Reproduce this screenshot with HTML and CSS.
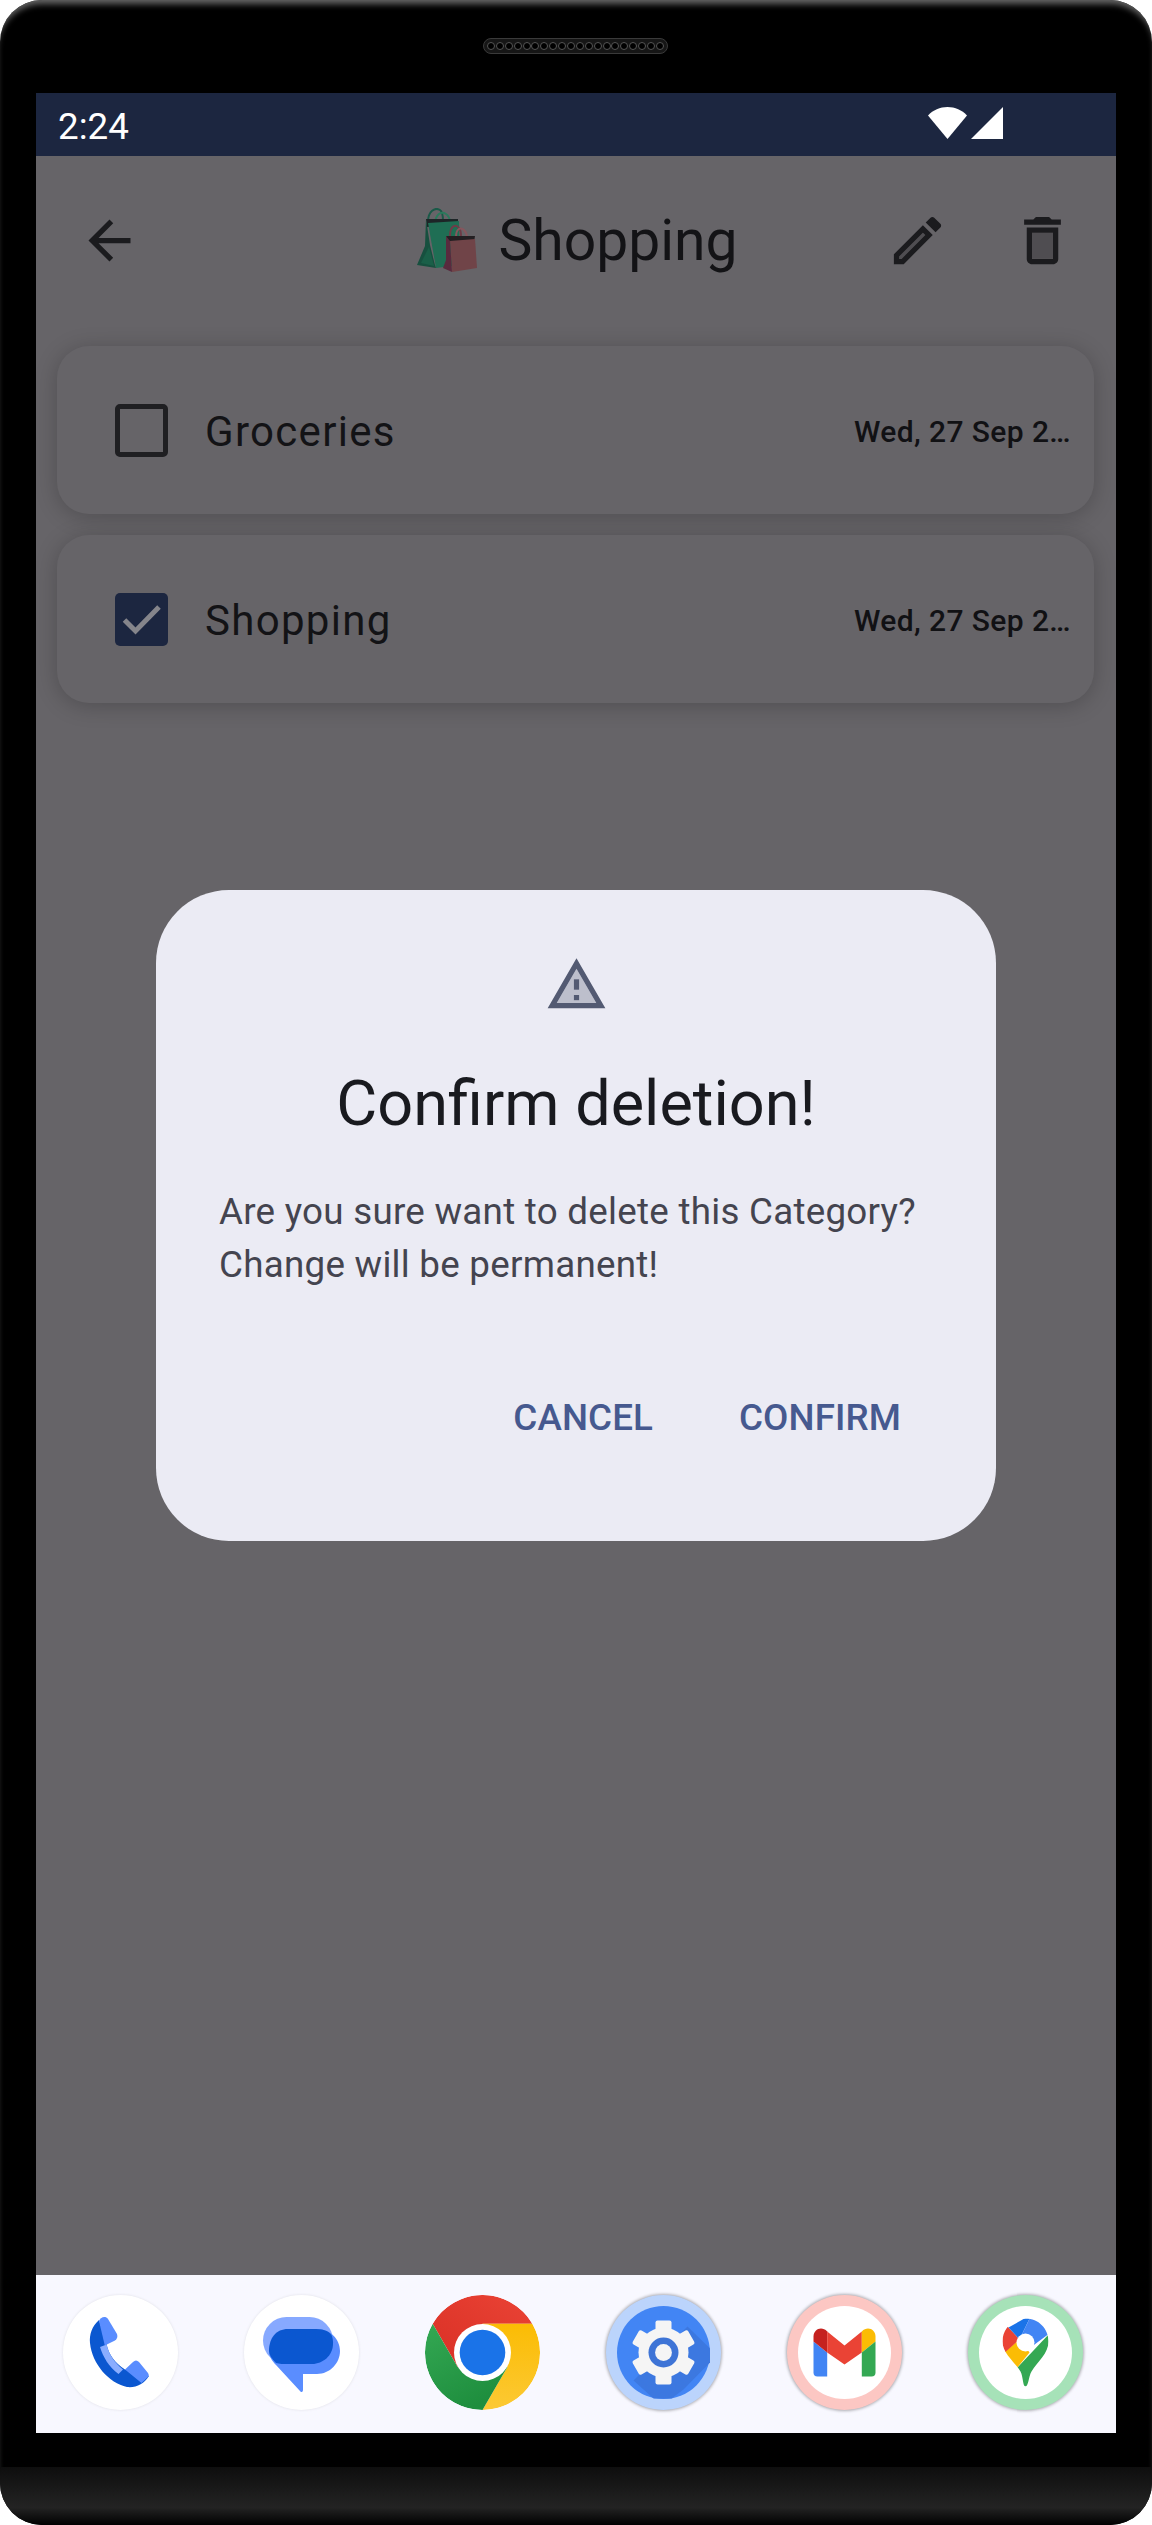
FILE: index.html
```html
<!DOCTYPE html>
<html lang="en">

<head>
    <meta charset="UTF-8">
    <meta name="viewport" content="width=device-width, initial-scale=1.0">
    <title>Shopping</title>
    <link rel="stylesheet" href="styles.css">
</head>

<body>
    <div class="phone">
        <div class="speaker">
            <i></i><i></i><i></i><i></i><i></i><i></i><i></i><i></i><i></i><i></i>
            <i></i><i></i><i></i><i></i><i></i><i></i><i></i><i></i><i></i><i></i>
        </div>

        <div class="screen">
            <div class="status-bar">
                <span class="clock">2:24</span>
                <div class="status-icons">
                    <svg width="39" height="32" viewBox="0 0 39 32">
                        <path fill="#fff" d="M19.5 32 0 8.5C5 3 12 0 19.5 0S34 3 39 8.5z" />
                    </svg>
                    <svg width="32" height="32" viewBox="0 0 32 32">
                        <path fill="#fff" d="M32 0v32H0z" />
                    </svg>
                </div>
            </div>

            <div class="app">
                <div class="toolbar">
                    <div class="toolbar-left">
                        <svg class="icon" viewBox="0 0 24 24">
                            <path d="M20 11H7.83l5.59-5.59L12 4l-8 8 8 8 1.41-1.41L7.83 13H20v-2z" />
                        </svg>
                    </div>
                    <div class="toolbar-title">
                        <!-- shopping bags emoji -->
                        <svg class="bags" width="60" height="64" viewBox="0 0 60 64">
                            <path fill="none" stroke="#1a5a48" stroke-width="2" d="M11 14C11 3 18-1 23 2c3 2 3 7 3 11" />
                            <path fill="none" stroke="#2b7a5c" stroke-width="2" d="M18 17C18 6 24 3 29 6c3 2 4 5 5 10" />
                            <path fill="#1d2527" d="M9 11h32v6l-31 2z" />
                            <path fill="#1f6e54" d="M11 15l31-2 1 44-24 3z" />
                            <path fill="#17503f" d="M9 11 8 38 0 57l19 3-1-3-5-20z" />
                            <path fill="#1a5f48" d="M4 55l8-16 5 19z" />
                            <path fill="none" stroke="#6e3b47" stroke-width="2" d="M33 28c0-11 6-12 9-8 2 2 2 5 2 9" />
                            <path fill="none" stroke="#87565d" stroke-width="2" d="M39 29c0-9 5-10 8-7 2 2 3 5 3 8" />
                            <path fill="#231f22" d="M29 28h29l-1 6H32z" />
                            <path fill="#704448" d="M33 33l25-2 2 29-25 4z" />
                            <path fill="#592a3e" d="M29 28l4 5 2 31-9-4 3-8z" />
                        </svg>
                        <span>Shopping</span>
                    </div>
                    <div class="toolbar-actions">
                        <svg class="icon" viewBox="0 0 24 24">
                            <path opacity=".3" d="M5 18.08V19h.92l9.06-9.06-.92-.92z" />
                            <path d="M20.71 7.04c.39-.39.39-1.02 0-1.41l-2.34-2.34c-.2-.2-.45-.29-.71-.29s-.51.09-.7.29l-1.83 1.83 3.75 3.75 1.83-1.83zM3 17.25V21h3.75L17.81 9.94l-3.75-3.75L3 17.25zM5.92 19H5v-.92l9.06-9.06.92.92L5.92 19z" />
                        </svg>
                        <svg class="icon" viewBox="0 0 24 24">
                            <path opacity=".3" d="M8 9h8v10H8z" />
                            <path d="M15.5 4l-1-1h-5l-1 1H5v2h14V4zM6 19c0 1.1.9 2 2 2h8c1.1 0 2-.9 2-2V7H6v12zM8 9h8v10H8V9z" />
                        </svg>
                    </div>
                </div>

                <div class="task-list">
                    <div class="task-card">
                        <span class="checkbox"></span>
                        <span class="task-name">Groceries</span>
                        <span class="task-date">Wed, 27 Sep 2…</span>
                    </div>
                    <div class="task-card">
                        <span class="checkbox checked">
                            <svg viewBox="0 0 53 53" width="53" height="53">
                                <path fill="none" stroke="#85858b" stroke-width="5" d="M9.5 27 20.5 38 44 14" />
                            </svg>
                        </span>
                        <span class="task-name">Shopping</span>
                        <span class="task-date">Wed, 27 Sep 2…</span>
                    </div>
                </div>
            </div>

            <div class="dialog">
                <svg class="dialog-icon" viewBox="0 0 24 24">
                    <path opacity=".3" d="M4.47 19h15.06L12 5.99 4.47 19zM13 18h-2v-2h2v2zm0-4h-2v-4h2v4z" />
                    <path d="M12 5.99 19.53 19H4.47L12 5.99M12 2 1 21h22L12 2zm1 14h-2v2h2v-2zm0-6h-2v4h2v-4z" />
                </svg>
                <h2 class="dialog-title">Confirm deletion!</h2>
                <p class="dialog-text">Are you sure want to delete this Category?<br>Change will be permanent!</p>
                <div class="dialog-buttons">
                    <span>CANCEL</span>
                    <span>CONFIRM</span>
                </div>
            </div>

            <div class="dock">
                <!-- phone -->
                <svg class="app-icon plain" viewBox="0 0 115 115">
                    <path fill="#0b57d0" d="M36 25C29 31 26 40 27 48c2 21 19 40 37 44 9 1 17-3 22-11L62 74.500C52 68 46 60 43.600 49.500z" />
                    <path fill="#8aadff" d="M37 52l6.600-2.500C46 60 52 68 60 74.500L55.500 79C46 72 40 62 37 52z" />
                    <path fill="#5a8dff" d="M36 26c1-3 6-6 9-2l9 15c1 3 0 5-2 6.500L41.800 50.500z" />
                    <path fill="#5a8dff" d="M62 74.500l8-7.500c2-2 4-2 6 0l9 11c1 2 1 3 0 4l-6.500 6z" />
                </svg>
                <!-- messages -->
                <svg class="app-icon plain" viewBox="0 0 115 115">
                    <rect x="19" y="22" width="70" height="47" rx="23.500" fill="#87a9ff" />
                    <path fill="#5a8dff" d="M49 34h24c13 0 23 10 23 22s-10 23-23 23H59v16c0 2-2 3-3 1L32 70c-4-4-7-9-7-13 0-13 11-23 24-23z" />
                    <path fill="#0b57d0" d="M44 34h28c9 0 14 3 16 7 1 3 1 6 1 8 0 11-10 20-21 20H44c-4 0-9 0-12-1-4-4-7-8-7-12 0-13 7-22 19-22z" />
                </svg>
                <!-- chrome -->
                <svg class="app-icon" viewBox="0 0 115 115">
                    <defs>
                        <linearGradient id="chromeRed" x1="0" y1="1" x2="1" y2="0">
                            <stop offset="0" stop-color="#d93025" />
                            <stop offset="1" stop-color="#ea4335" />
                        </linearGradient>
                        <linearGradient id="chromeGreen" x1="0" y1="0" x2=".5" y2="1">
                            <stop offset="0" stop-color="#34a853" />
                            <stop offset="1" stop-color="#1e8e3e" />
                        </linearGradient>
                        <linearGradient id="chromeYellow" x1=".5" y1="0" x2=".5" y2="1">
                            <stop offset="0" stop-color="#fbbc04" />
                            <stop offset="1" stop-color="#fcc934" />
                        </linearGradient>
                    </defs>
                    <path fill="url(#chromeRed)" d="M7.700 28.750A57.500 57.500 0 0 1 107.300 28.750H57.500L32.600 71.900z" />
                    <path fill="url(#chromeYellow)" d="M107.300 28.750A57.500 57.500 0 0 1 57.500 115L82.400 71.900 57.500 28.750z" />
                    <path fill="url(#chromeGreen)" d="M57.500 115A57.500 57.500 0 0 1 7.700 28.750L32.600 71.900H82.400z" />
                    <circle cx="57.500" cy="57.500" r="28.500" fill="#fff" />
                    <circle cx="57.500" cy="57.500" r="22.800" fill="#1a73e8" />
                </svg>
                <!-- settings -->
                <span class="app-ring ring-blue">
                    <svg width="93" height="93" viewBox="-46.500 -46.500 93 93">
                        <circle r="46.500" fill="#4285f4" />
                        <path fill="#3c78e0" d="M24 -26 46.500 -4V10L20 37 8 46H-10L-30 28z" />
                        <g fill="#f5f5f5">
                            <circle r="25" />
                            <rect x="-8" y="-32" width="16" height="64" rx="2" />
                            <rect x="-8" y="-32" width="16" height="64" rx="2" transform="rotate(60)" />
                            <rect x="-8" y="-32" width="16" height="64" rx="2" transform="rotate(120)" />
                        </g>
                        <circle r="15" fill="#3e74d6" />
                        <circle r="8.400" fill="#f5f5f5" />
                    </svg>
                </span>
                <!-- gmail -->
                <span class="app-ring ring-red">
                    <svg width="93" height="93" viewBox="-46.500 -46.500 93 93">
                        <circle r="46.500" fill="#fff" />
                        <path fill="#4285f4" d="M-31-11-17.300 0V24H-27a4 4 0 0 1-4-4z" />
                        <path fill="#c5221f" d="M-31-11V-16C-31-23-23-27-17.300-21V0z" />
                        <path fill="#ea4335" d="M-17.300-21 0-7 17.300-21V0L0 12-17.300 0z" />
                        <path fill="#fbbc04" d="M17.300-21C23-27 31-23 31-16V-11L17.300 0z" />
                        <path fill="#34a853" d="M31-11V20a4 4 0 0 1-4 4H17.300V0z" />
                    </svg>
                </span>
                <!-- maps -->
                <span class="app-ring ring-green">
                    <svg width="93" height="93" viewBox="-46.500 -46.500 93 93">
                        <defs>
                            <clipPath id="pinClip">
                                <path d="M0-34C13-34 23-24 23-11 23 1 12 9 6 19 3 24 3 34 0 34S-2 25-5 19C-11 9-23 1-23-11-23-24-13-34 0-34z" />
                            </clipPath>
                        </defs>
                        <circle r="46.500" fill="#fff" />
                        <g clip-path="url(#pinClip)">
                            <path fill="#34a853" d="M24-19-9 16-9 40 26 40z" />
                            <path fill="#fbbc04" d="M-24 2-6-13 4 0-9 16z" />
                            <path fill="#ea4335" d="M-26-30-17-25-6-13-24 3z" />
                            <path fill="#1a73e8" d="M-17-25 6-38-6-13z" />
                            <path fill="#4285f4" d="M6-38-6-13 5-5 24-19 26-38z" />
                        </g>
                        <circle cy="-10" r="9" fill="#fff" />
                    </svg>
                </span>
            </div>
        </div>

        <div class="chin"></div>
    </div>
</body>

</html>
```

FILE: styles.css
```css
* {
    box-sizing: border-box;
}

html,
body {
    margin: 0;
    background-color: #fff;
}

body {
    font-family: Roboto, "Liberation Sans", sans-serif;
}

.phone {
    width: 1152px;
    height: 2525px;
    display: flex;
    flex-direction: column;
    background-color: #000;
    border-radius: 42px;
    box-shadow: inset 0 7px 6px -3px #666;
    overflow: hidden;
}

.speaker {
    width: 185px;
    height: 16px;
    margin: 38px 0 0 483px;
    padding: 0 3px;
    display: flex;
    align-items: center;
    justify-content: space-between;
    border: 1px solid #3a3a3a;
    border-radius: 8px;
    background-color: #161616;
}

.speaker i {
    width: 8px;
    height: 8px;
    border-radius: 50%;
    background-color: #000;
    border: 1px solid #555;
}

.screen {
    position: relative;
    width: 1080px;
    height: 2340px;
    margin: 39px 0 0 36px;
    display: flex;
    flex-direction: column;
}

.status-bar {
    height: 63px;
    padding: 12px 113px 0 22px;
    display: flex;
    justify-content: space-between;
    align-items: flex-start;
    background-color: #1c2640;
    color: #fff;
}

.clock {
    font-size: 36.75px;
    line-height: 43px;
}

.status-icons {
    margin-top: 2px;
    display: flex;
    gap: 4px;
}

.app {
    flex: 1;
    background-color: #666468;
}

.toolbar {
    padding: 52px 42px 0 42px;
    display: grid;
    grid-template-columns: 1fr auto 1fr;
    align-items: center;
}

.icon {
    width: 63px;
    height: 63px;
    display: block;
    fill: #1b1b1e;
}

.toolbar-title {
    padding-left: 3px;
    display: flex;
    align-items: center;
    gap: 21px;
    font-size: 57px;
    line-height: 63px;
    color: #131316;
}

.toolbar-actions {
    display: flex;
    justify-content: flex-end;
    gap: 62.5px;
}

.task-list {
    margin: 74px 22px 0 21px;
    display: flex;
    flex-direction: column;
    gap: 21px;
}

.task-card {
    height: 168px;
    padding: 0 23px 0 58px;
    display: flex;
    align-items: center;
    border-radius: 32px;
    background-color: #666468;
    box-shadow: 0 3px 22px rgba(0, 0, 0, 0.22);
}

.checkbox {
    width: 53px;
    height: 53px;
    flex-shrink: 0;
    border: 5px solid #1f1f22;
    border-radius: 5px;
}

.checkbox.checked {
    border: 0;
    background-color: #1c2640;
}

.checkbox svg {
    display: block;
}

.task-name {
    flex: 1;
    margin: 2px 0 0 37px;
    font-size: 42px;
    letter-spacing: 1.3px;
    color: #131316;
}

.task-date {
    margin-top: 2px;
    white-space: nowrap;
    font-size: 30px;
    font-weight: 500;
    letter-spacing: 0.4px;
    color: #111114;
}

/* sits over the dimmed list */
.dialog {
    position: absolute;
    top: 797px;
    left: 120px;
    width: 840px;
    height: 651px;
    padding: 63px 63px 0;
    border-radius: 73px;
    background-color: #ebebf4;
}

.dialog-icon {
    width: 63px;
    height: 63px;
    display: block;
    margin: 0 auto;
    fill: #535a72;
}

.dialog-title {
    margin: 46px 0 0;
    font-size: 63px;
    line-height: 84px;
    font-weight: 400;
    text-align: center;
    color: #191a1f;
}

.dialog-text {
    margin: 40px 0 0;
    font-size: 36.75px;
    line-height: 52.5px;
    letter-spacing: 0.26px;
    color: #44444f;
}

.dialog-buttons {
    margin-top: 101px;
    padding-right: 32px;
    display: flex;
    justify-content: flex-end;
    gap: 86px;
    font-size: 36.75px;
    line-height: 52.5px;
    font-weight: 500;
    letter-spacing: 0.1px;
    color: #46598f;
}

.dock {
    height: 158px;
    padding: 20px 0 0 27px;
    display: flex;
    align-items: flex-start;
    gap: 66px;
    background-color: #f8f8ff;
}

.app-icon {
    width: 115px;
    height: 115px;
    flex-shrink: 0;
    display: block;
    border-radius: 50%;
}

.app-icon.plain {
    background-color: #fff;
    box-shadow: 0 0 3px rgba(0, 0, 0, 0.1);
}

.app-ring {
    width: 115px;
    height: 115px;
    flex-shrink: 0;
    display: flex;
    align-items: center;
    justify-content: center;
    border-radius: 50%;
    box-shadow: 0 0 3px 1px rgba(0, 0, 0, 0.3);
}

.ring-blue {
    background-color: #bbd4fc;
}

.ring-red {
    background-color: #fcc7c3;
}

.ring-green {
    background-color: #a6e2b8;
}

.chin {
    height: 58px;
    margin-top: 34px;
    background: linear-gradient(#0e0e0e, #232323 70%, #000);
}
```
